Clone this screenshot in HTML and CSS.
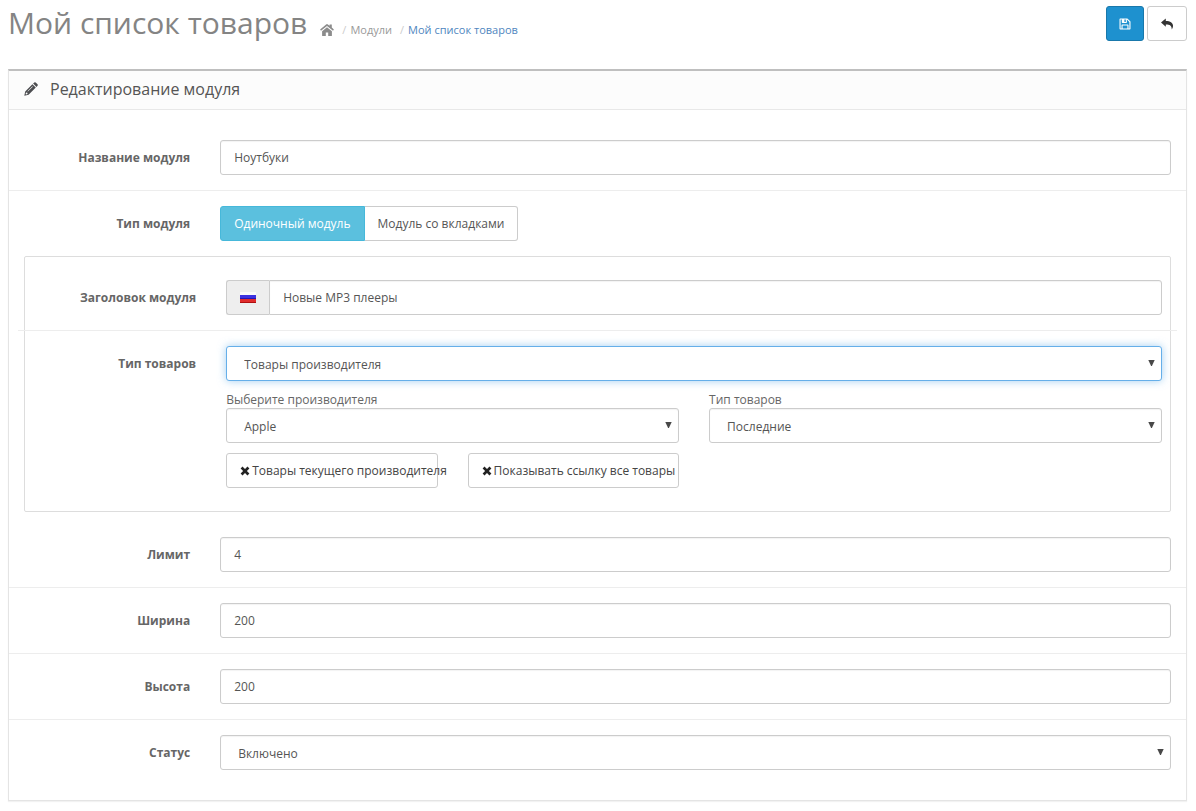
FILE: index.html
```html
<!DOCTYPE html>
<html lang="ru">
<head>
<meta charset="utf-8">
<meta name="viewport" content="width=device-width, initial-scale=1">
<title>Мой список товаров</title>
<link rel="stylesheet" href="styles.css">
</head>
<body>
<header class="page-header">
  <h1 class="page-title">Мой список товаров</h1>
  <nav class="breadcrumb" aria-label="Навигация">
    <a class="crumb" href="#" aria-label="Главная"><svg class="icon-home" viewBox="0 0 14 12" aria-hidden="true"><path d="M7 3.2 2.1 7.2V11.4q0 .5.5.5H5.8V8.6H8.2V11.9H11.4q.5 0 .5-.5V7.2Z"/><path d="M7 .1q.5 0 .9.3L9.6 1.8V.6H11.8V3.6L13.9 5.5 13 6.7 7 1.9 1 6.7.1 5.5 6.1.4Q6.5.1 7 .1Z"/></svg></a>
    <a class="crumb" href="#">Модули</a>
    <a class="crumb crumb-current" href="#">Мой список товаров</a>
  </nav>
  <div class="actions">
    <button class="btn btn-primary" type="submit" form="module-form" aria-label="Сохранить"><svg class="icon-save" viewBox="0 0 12 12" aria-hidden="true"><path fill-rule="evenodd" d="M1.2.5H8.4L11.5 3.6V10.8Q11.5 11.5 10.8 11.5H1.2Q.5 11.5.5 10.8V1.2Q.5.5 1.2.5ZM1.6 1.6V10.4H2.5V7.2Q2.5 6.5 3.2 6.5H8.8Q9.5 6.5 9.5 7.2V10.4H10.4V4.1L7.9 1.6V4.2Q7.9 4.9 7.2 4.9H3.5Q2.8 4.9 2.8 4.2V1.6ZM5.4 1.6V3.9H6.8V1.6ZM3.6 7.6V10.4H8.4V7.6Z"/></svg></button>
    <a class="btn btn-back" href="#" aria-label="Назад"><svg class="icon-back" viewBox="0 0 12 12" aria-hidden="true"><path d="M0 4.6 4.8.6V2.9C9.8 2.9 12.2 5 12 8.2Q11.9 9.8 10.7 11.6C10.9 7.9 9.3 6.4 4.8 6.4V8.7Z"/></svg></a>
  </div>
</header>

<main class="panel">
  <div class="panel-heading">
    <svg class="icon-pencil" viewBox="0 0 14 14" aria-hidden="true"><path fill-rule="evenodd" d="M.3 13.7 1.2 9.4 8.4 2.2 11.8 5.6 4.6 12.8ZM2 10.5 1.6 11.9 2.1 12.4 3.5 12 3.4 10.7ZM3.5 9.2 3.9 9.6 8.8 4.7 8.4 4.3ZM9.1 1.5 10.3.4Q11-.1 11.7.5L13.5 2.3Q14.1 3 13.5 3.8L12.5 4.9Z"/></svg>
    <h2 class="panel-title">Редактирование модуля</h2>
  </div>
  <form class="panel-body" id="module-form">
    <div class="form-group">
      <label class="form-label" for="name">Название модуля</label>
      <input class="control" id="name" type="text" value="Ноутбуки">
    </div>
    <div class="form-group" role="radiogroup" aria-labelledby="kind-label">
      <span class="form-label" id="kind-label">Тип модуля</span>
      <div class="segments">
        <label class="segment"><input class="segment-input" type="radio" name="kind" checked>Одиночный модуль</label>
        <label class="segment"><input class="segment-input" type="radio" name="kind">Модуль со вкладками</label>
      </div>
    </div>

    <section class="box">
      <div class="form-group">
        <label class="form-label" for="title">Заголовок модуля</label>
        <div class="input-group">
          <span class="addon"><svg class="flag" viewBox="0 0 16 11" role="img" aria-label="Русский"><path fill="#fafafa" d="M0 0H16V4H0Z"/><path fill="#3c32e0" d="M0 3H16V8H0Z"/><path fill="#2416b4" d="M0 6H16V8H0Z"/><path fill="#e02c2c" d="M0 7H16V11H0Z"/><path fill="#b01010" d="M0 10H16V11H0Z"/></svg></span>
          <input class="control" id="title" type="text" value="Новые MP3 плееры">
        </div>
      </div>
      <div class="form-group">
        <label class="form-label" for="goods">Тип товаров</label>
        <div class="stack">
          <select class="control select select-active" id="goods"><option>Товары производителя</option></select>
          <div class="columns">
            <div class="field">
              <label class="field-label" for="maker">Выберите производителя</label>
              <select class="control select" id="maker"><option>Apple</option></select>
            </div>
            <div class="field">
              <label class="field-label" for="order">Тип товаров</label>
              <select class="control select" id="order"><option>Последние</option></select>
            </div>
            <div class="columns">
              <button class="btn toggle" type="button" aria-pressed="false"><svg class="icon-times" viewBox="0 0 10 10" aria-hidden="true"><path d="M2.5.6 5 3.1 7.5.6 9.4 2.5 6.9 5 9.4 7.5 7.5 9.4 5 6.9 2.5 9.4.6 7.5 3.1 5 .6 2.5Z"/></svg>Товары текущего производителя</button>
              <button class="btn toggle" type="button" aria-pressed="false"><svg class="icon-times" viewBox="0 0 10 10" aria-hidden="true"><path d="M2.5.6 5 3.1 7.5.6 9.4 2.5 6.9 5 9.4 7.5 7.5 9.4 5 6.9 2.5 9.4.6 7.5 3.1 5 .6 2.5Z"/></svg>Показывать ссылку все товары</button>
            </div>
          </div>
        </div>
      </div>
    </section>

    <div class="form-group">
      <label class="form-label" for="limit">Лимит</label>
      <input class="control" id="limit" type="text" value="4">
    </div>
    <div class="form-group">
      <label class="form-label" for="width">Ширина</label>
      <input class="control" id="width" type="text" value="200">
    </div>
    <div class="form-group">
      <label class="form-label" for="height">Высота</label>
      <input class="control" id="height" type="text" value="200">
    </div>
    <div class="form-group">
      <label class="form-label" for="status">Статус</label>
      <select class="control select" id="status"><option>Включено</option></select>
    </div>
  </form>
</main>
</body>
</html>
```

FILE: styles.css
```css
* {
  box-sizing: border-box;
}

body {
  margin: 0;
  padding: 6px 9px 9px 8px;
  background: #fff;
  color: #666;
  font: 12px/17px "Open Sans", "Noto Sans", sans-serif;
}

a {
  color: inherit;
  text-decoration: none;
}

.page-header {
  display: flex;
  align-items: flex-start;
  margin-bottom: 28px;
}

.page-title {
  margin: 0;
  color: #848484;
  font-size: 30px;
  font-weight: 400;
  line-height: 33px;
}

.breadcrumb {
  display: flex;
  align-items: center;
  height: 17px;
  margin: 15px 0 0 13px;
  color: #999;
  font-size: 11px;
}

.crumb {
  display: flex;
}

.crumb + .crumb::before {
  content: "/";
  padding: 0 4px 0 8px;
  color: #ccc;
}

.crumb-current {
  color: #4f86c0;
}

.icon-home {
  width: 14px;
  height: 12px;
  fill: #8c8c8c;
}

.actions {
  display: flex;
  gap: 3px;
  margin-left: auto;
}

.btn {
  display: flex;
  align-items: center;
  height: 35px;
  padding: 0 13px;
  border: 1px solid #ccc;
  border-radius: 3px;
  background: #fff;
  color: #444;
  font: inherit;
  white-space: nowrap;
}

.btn-primary {
  padding: 0 12px;
  border-color: #1978ab;
  background: #1e91cf;
}

.icon-save {
  width: 12px;
  height: 12px;
  fill: #fff;
}

.icon-back {
  width: 12px;
  height: 12px;
  fill: #333;
}

.panel {
  border: 1px solid #e4e4e4;
  border-top: 2px solid #bfbfbf;
  box-shadow: 0 1px 1px rgba(0, 0, 0, 0.05);
}

.panel-heading {
  display: flex;
  align-items: center;
  gap: 12px;
  height: 39px;
  padding: 0 15px 2px;
  border-bottom: 1px solid #e8e8e8;
  background: #fcfcfc;
}

.icon-pencil {
  width: 14px;
  height: 14px;
  fill: #4c4d50;
}

.panel-title {
  margin: 0;
  color: #555;
  font-size: 16px;
  font-weight: 400;
  line-height: 20px;
}

.panel-body {
  padding: 15px;
}

.form-group {
  display: grid;
  grid-template-columns: calc((100% + 15px) / 6) 1fr;
  margin: 0 -15px;
  padding: 15px 15px 15px 0;
}

.form-group + .form-group {
  border-top: 1px solid #ededed;
}

.form-label {
  padding: 9px 15px 0 0;
  font-weight: 700;
  text-align: right;
}

.form-label + * {
  margin-left: 15px;
}

.control {
  min-width: 0;
  height: 35px;
  padding: 0 13px;
  border: 1px solid #ccc;
  border-radius: 3px;
  background: #fff;
  box-shadow: inset 0 1px 1px rgba(0, 0, 0, 0.05);
  color: #555;
  font: inherit;
}

.select {
  appearance: none;
  width: 100%;
  padding: 2px 17px 0;
  background: #fff url("data:image/svg+xml,%3Csvg xmlns='http://www.w3.org/2000/svg' width='7' height='8'%3E%3Cpath d='M.3 0H6.7L3.9 6H3.1Z' fill='%23484848'/%3E%3C/svg%3E") no-repeat right 6px center;
}

.form-label + .select {
  width: auto;
}

.select-active {
  border-color: #66afe9;
  box-shadow: 0 0 8px rgba(102, 175, 233, 0.6);
}

.segments {
  display: flex;
}

.segment {
  height: 35px;
  padding: 8px 13px;
  border: 1px solid #ccc;
  border-left: 0;
  border-radius: 0 3px 3px 0;
  color: #555;
}

.segment:first-child {
  border-left: 1px solid #ccc;
  border-radius: 3px 0 0 3px;
}

.segment:has(:checked) {
  border-color: #46b8da;
  background: #5bc0de;
  color: #fff;
}

.segment-input {
  appearance: none;
  float: left;
  width: 0;
  height: 0;
  margin: 0;
}

.box {
  margin-bottom: 10px;
  padding: 8px;
  border: 1px solid #ddd;
  border-radius: 2px;
}

.input-group {
  display: flex;
}

.input-group .control {
  flex: 1;
  border-radius: 0 3px 3px 0;
}

.addon {
  display: flex;
  align-items: center;
  padding: 0 13px;
  border: 1px solid #ccc;
  border-right: 0;
  border-radius: 3px 0 0 3px;
  background: #eee;
}

.flag {
  width: 16px;
  height: 11px;
}

.stack {
  display: grid;
  gap: 10px;
}

.columns {
  display: grid;
  grid-template-columns: minmax(0, 1fr) minmax(0, 1fr);
  gap: 10px 30px;
}

.field-label {
  display: block;
}

.toggle {
  gap: 2px;
  justify-content: flex-start;
}

.icon-times {
  flex: none;
  width: 10px;
  height: 10px;
  fill: #222;
}
```
